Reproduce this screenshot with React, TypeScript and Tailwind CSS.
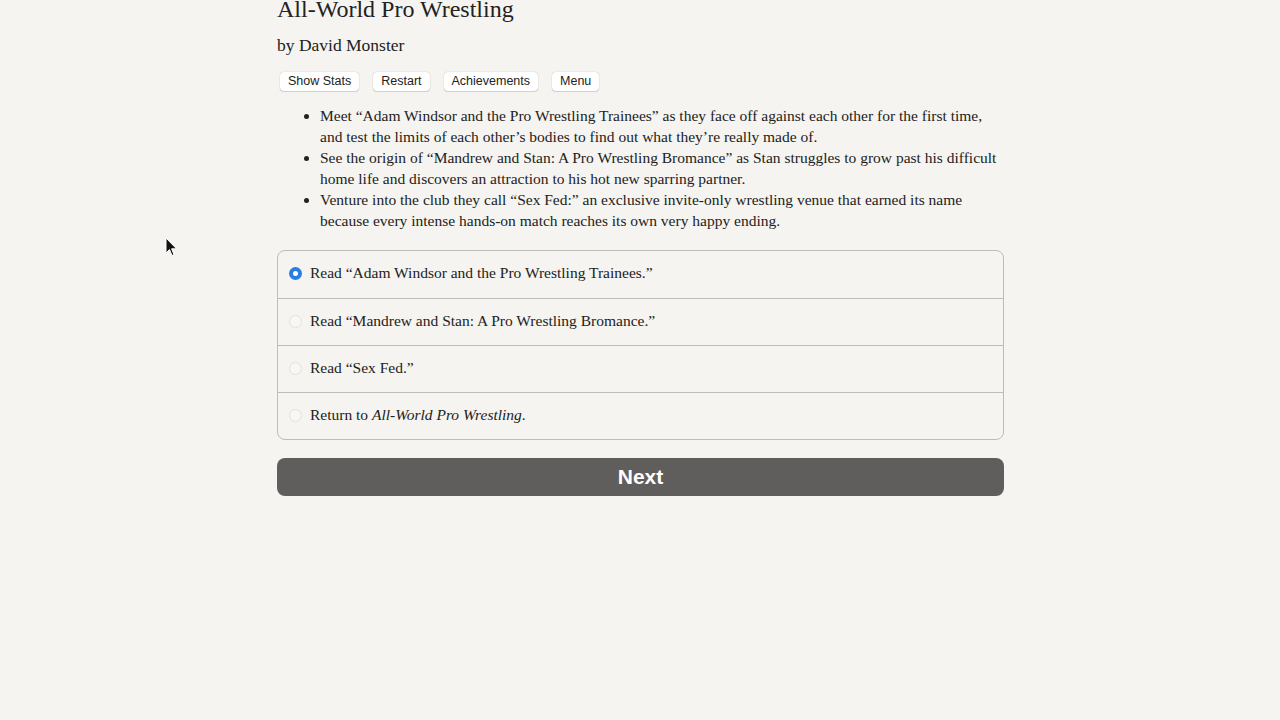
import React, { useState } from 'react';

const serif = { fontFamily: '"Liberation Serif", "DejaVu Serif", serif' };
const sans = { fontFamily: '"Liberation Sans", Arial, sans-serif' };

const choices: React.ReactNode[] = [
  <>Read “Adam Windsor and the Pro Wrestling Trainees.”</>,
  <>Read “Mandrew and Stan: A Pro Wrestling Bromance.”</>,
  <>Read “Sex Fed.”</>,
  <>
    Return to <i>All-World Pro Wrestling</i>.
  </>,
];

export default function App() {
  const [selected, setSelected] = useState(0);

  return (
    <div className="relative min-h-screen overflow-hidden bg-[#f5f4f0] text-[#222]" style={serif}>
      <div className="mx-auto w-[728px] pl-[1px]">
        <h1 className="mt-[-9px] text-[24px] leading-[36px]">All-World Pro Wrestling</h1>
        <h2 className="mt-[7px] text-[17.5px] leading-[22px]">by David Monster</h2>

        <div className="mt-[16px] flex gap-[14px] pl-[3px]" style={sans}>
          {['Show Stats', 'Restart', 'Achievements', 'Menu'].map((label) => (
            <button
              key={label}
              className="h-[19px] rounded-[4px] bg-white px-[8px] text-[12.5px] leading-[19px] text-[#222] shadow-[0_0_1px_rgba(0,0,0,0.35),0_1px_1px_rgba(0,0,0,0.12)]"
            >
              {label}
            </button>
          ))}
        </div>

        <ul className="mt-[14px] list-disc pl-[43px] text-[15.5px] leading-[21px]">
          <li>
            Meet “Adam Windsor and the Pro Wrestling Trainees” as they face off against each other for the first time,
            and test the limits of each other’s bodies to find out what they’re really made of.
          </li>
          <li>
            See the origin of “Mandrew and Stan: A Pro Wrestling Bromance” as Stan struggles to grow past his difficult
            home life and discovers an attraction to his hot new sparring partner.
          </li>
          <li>
            Venture into the club they call “Sex Fed:” an exclusive invite-only wrestling venue that earned its name
            because every intense hands-on match reaches its own very happy ending.
          </li>
        </ul>

        <div className="mt-[19px] overflow-hidden rounded-[8px] border border-[#bdbcb8]">
          {choices.map((c, i) => (
            <label
              key={i}
              className={`flex h-[47px] cursor-pointer items-center gap-[8px] pb-[3px] pl-[11px] text-[15.5px] ${
                i > 0 ? 'border-t border-[#bdbcb8]' : ''
              }`}
              onClick={() => setSelected(i)}
            >
              {selected === i ? (
                <span className="mt-[1px] flex h-[13px] w-[13px] items-center justify-center rounded-full bg-[#2a7de1]">
                  <span className="h-[5px] w-[5px] rounded-full bg-white" />
                </span>
              ) : (
                <span className="mt-[1px] h-[13px] w-[13px] rounded-full border border-[#e2e1dd] bg-[#f8f7f4]" />
              )}
              <span>{c}</span>
            </label>
          ))}
        </div>

        <button
          className="mt-[18px] h-[38px] w-full rounded-[8px] bg-[#5f5e5c] text-[21px] font-bold text-white"
          style={sans}
        >
          Next
        </button>
      </div>

      {/* mouse pointer */}
      <svg className="absolute left-[165px] top-[237px]" width="13" height="20" viewBox="0 0 13 20">
        <path d="M1 1 L1 16 L4.5 12.5 L7 18.5 L9 17.6 L6.6 11.8 L11.5 11.8 Z" fill="#111" stroke="#fff" strokeWidth="1" />
      </svg>
    </div>
  );
}
